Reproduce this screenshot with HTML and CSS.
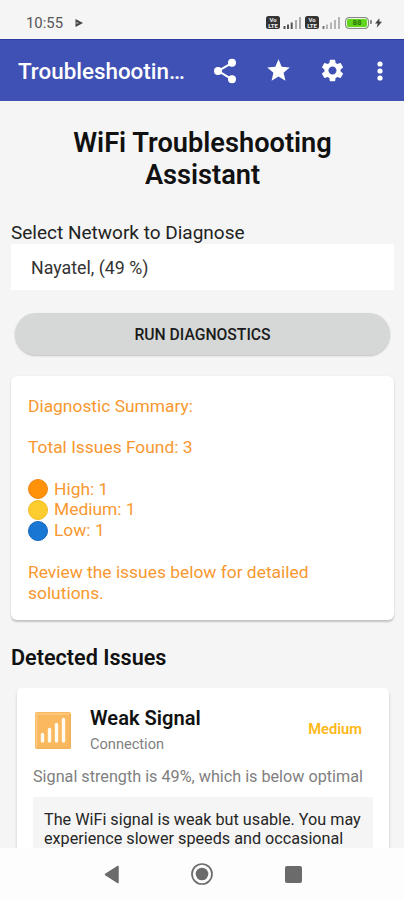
FILE: index.html
```html
<!DOCTYPE html>
<html lang="en">
<head>
<meta charset="utf-8">
<title>WiFi Troubleshooting Assistant</title>
<link rel="stylesheet" href="styles.css">
</head>
<body>
<div class="screen">
  <div class="status">
    <span class="clock">10:55</span>
    <svg class="play" width="8" height="8" viewBox="0 0 8 8"><path d="M.5 0L8 4 .5 8z" fill="#444"/><path d="M1 4h2.500" stroke="#ccc"/></svg>
    <div class="indicators">
      <span class="volte"><span>Vo</span><span>LTE</span></span>
      <svg class="bars" width="19" height="12" viewBox="0 0 19 12"><path d="M1.500 9v3M5 7.500V12M8.700 5.500V12" stroke="#555" stroke-width="2"/><path d="M13 3v9M17 0v12" stroke="#aaa" stroke-width="2"/></svg>
      <span class="volte second"><span>Vo</span><span>LTE</span></span>
      <svg class="bars" width="19" height="12" viewBox="0 0 19 12"><path d="M1.500 9v3" stroke="#777" stroke-width="2"/><path d="M5 7.500V12M9 5.500V12M13 3v9M17 0v12" stroke="#b5b5b5" stroke-width="2"/></svg>
      <span class="battery"><span>88</span></span>
      <svg class="bolt" width="7" height="10" viewBox="0 0 8 11"><path d="M5 0L0 6h3L2 11l6-7H5z" fill="#444"/></svg>
    </div>
  </div>
  <header class="appbar">
    <span class="bar-title">Troubleshootin…</span>
    <svg class="share" width="28" height="28" viewBox="0 0 24 24"><path fill="#fff" d="M18 16.080c-.76 0-1.440.3-1.960.77L8.910 12.700c.05-.23.090-.46.090-.7s-.04-.47-.09-.7l7.050-4.110c.54.5 1.250.81 2.040.81 1.660 0 3-1.340 3-3s-1.340-3-3-3-3 1.340-3 3c0 .24.040.47.090.7L8.040 9.810C7.500 9.310 6.790 9 6 9c-1.660 0-3 1.340-3 3s1.340 3 3 3c.79 0 1.500-.31 2.040-.81l7.120 4.160c-.05.21-.08.430-.08.650 0 1.610 1.310 2.920 2.920 2.920s2.920-1.310 2.920-2.920-1.310-2.920-2.920-2.920z"/><g fill="#fff"><circle cx="18" cy="5" r="3.400"/><circle cx="6" cy="12" r="3.400"/><circle cx="18" cy="19" r="3.400"/></g></svg>
    <svg class="star" width="27" height="27" viewBox="0 0 24 24"><path fill="#fff" d="M12 17.270L18.180 21l-1.640-7.030L22 9.240l-7.190-.61L12 2 9.190 8.630 2 9.240l5.460 4.730L5.820 21z"/></svg>
    <svg class="gear" width="27" height="27" viewBox="0 0 24 24"><path fill="#fff" d="M19.140 12.940c.04-.3.060-.61.060-.94 0-.32-.02-.64-.07-.94l2.030-1.580c.18-.14.230-.41.120-.61l-1.920-3.320c-.12-.22-.37-.29-.59-.22l-2.390.96c-.5-.38-1.030-.7-1.620-.94l-.36-2.540c-.04-.24-.24-.41-.48-.41h-3.840c-.24 0-.43.170-.47.410l-.36 2.540c-.59.240-1.130.570-1.620.940l-2.390-.96c-.22-.08-.47 0-.59.220L2.740 8.870c-.12.210-.08.470.12.610l2.030 1.580c-.05.3-.09.630-.09.940s.02.640.07.940l-2.030 1.580c-.18.140-.23.410-.12.610l1.920 3.320c.12.220.37.290.59.220l2.390-.96c.5.380 1.030.7 1.620.940l.36 2.540c.05.240.24.410.48.410h3.840c.24 0 .44-.17.470-.41l.36-2.540c.59-.24 1.130-.56 1.620-.94l2.390.96c.22.080.47 0 .59-.22l1.920-3.320c.12-.22.070-.47-.12-.61l-2.010-1.580zM12 15.600c-1.980 0-3.600-1.620-3.600-3.600s1.620-3.600 3.600-3.600 3.600 1.620 3.600 3.600-1.620 3.600-3.600 3.600z"/></svg>
    <svg class="more" width="6" height="20" viewBox="0 0 6 20"><g fill="#fff"><circle cx="3" cy="3" r="2.600"/><circle cx="3" cy="10" r="2.600"/><circle cx="3" cy="17" r="2.600"/></g></svg>
  </header>
  <main class="content">
    <h1>WiFi Troubleshooting<br>Assistant</h1>
    <label class="select-label">Select Network to Diagnose</label>
    <div class="select"><span>Nayatel, (49 %)</span></div>
    <button class="run"><span>RUN DIAGNOSTICS</span></button>
    <section class="summary">
      <p><span>Diagnostic Summary:</span></p>
      <p class="gap"><span>Total Issues Found: 3</span></p>
      <p class="gap level"><i class="dot high"></i><span>High: 1</span></p>
      <p class="level"><i class="dot medium"></i><span>Medium: 1</span></p>
      <p class="level"><i class="dot low"></i><span>Low: 1</span></p>
      <p class="gap"><span>Review the issues below for detailed</span></p>
      <p><span>solutions.</span></p>
    </section>
    <h2>Detected Issues</h2>
    <section class="issue">
      <div class="issue-head">
        <svg width="36" height="37" viewBox="0 0 36 37"><rect width="36" height="37" rx="2" fill="#fab85f"/><path d="M1.500 35V2h33" fill="none" stroke="#ffcb85" stroke-width="1.500"/><path d="M35.300 2v34H1" fill="none" stroke="#efae5b" stroke-width="1.200"/><path d="M7.500 22.500v6.500M14.500 17.500V29M21.500 12.500V29M28.500 7.500V29" stroke="#fffaf0" stroke-width="3.400" stroke-linecap="round"/></svg>
        <div class="issue-name"><h3>Weak Signal</h3><span class="category">Connection</span></div>
        <span class="severity">Medium</span>
      </div>
      <p class="desc">Signal strength is 49%, which is below optimal</p>
      <div class="detail"><p>The WiFi signal is weak but usable. You may</p><p>experience slower speeds and occasional</p></div>
    </section>
  </main>
  <nav class="navbar">
    <svg width="15" height="19" viewBox="0 0 15 19"><path d="M14 1.500v16L1.500 9.500z" fill="#6b6b6b" stroke="#6b6b6b" stroke-width="1.500" stroke-linejoin="round"/></svg>
    <svg width="22" height="22" viewBox="0 0 22 22"><circle cx="11" cy="11" r="10" fill="none" stroke="#6b6b6b" stroke-width="1.700"/><circle cx="11" cy="11" r="6.300" fill="#6b6b6b"/></svg>
    <svg width="17" height="17" viewBox="0 0 17 17"><rect width="17" height="17" rx="2" fill="#6b6b6b"/></svg>
  </nav>
</div>
</body>
</html>
```

FILE: styles.css
```css
* { box-sizing: border-box; margin: 0; padding: 0; }
body { font-family: Roboto, "Liberation Sans", sans-serif; color: #111; background: #f5f5f5; }
svg { display: block; flex: none; }
.screen { width: 404px; height: 900px; overflow: hidden; display: flex; flex-direction: column; background: #f5f5f5; white-space: nowrap; }
.status { flex: none; height: 39px; display: flex; align-items: center; padding: 6px 22px 0 26px; }
.clock { font-size: 14.900px; color: #555; width: 38px; }
.play { margin-left: 11px; }
.indicators { margin-left: auto; display: flex; align-items: center; }
.volte { width: 14px; height: 13px; border-radius: 2.500px; background: #333; color: #eee; display: flex; flex-direction: column; align-items: center; justify-content: center; font-size: 6px; line-height: 5.500px; font-weight: 700; margin-right: 3px; }
.volte.second { margin-left: 3px; }
.battery { width: 24px; height: 12px; border: 1.500px solid #888; border-radius: 4px; background: #63d51c; box-shadow: inset 0 0 0 1px #e8f5df; margin-left: 4px; color: #28720a; font-size: 8px; line-height: 9px; font-weight: 700; text-align: center; position: relative; }
.battery::after { content: ""; position: absolute; right: -4px; top: 2.500px; width: 2px; height: 4px; background: #888; border-radius: 0 1px 1px 0; }
.bolt { margin-left: 6px; }
.appbar { flex: none; height: 62px; background: #3f51b5; border-top: 1px solid #2c3d9f; display: flex; align-items: center; padding: 0 21px 0 18px; color: #fff; }
.bar-title { font-size: 22.400px; font-weight: 500; width: 166px; padding-top: 1px; }
.share { margin-left: 27px; }
.star { margin-left: 26px; }
.gear { margin-left: 27px; }
.more { margin-left: auto; }
.content { flex: 1; min-height: 0; overflow: hidden; padding: 26px 10px 0 11px; display: flex; flex-direction: column; }
h1 { font-size: 27.200px; line-height: 32px; font-weight: 600; text-align: center; }
.select-label { font-size: 19px; line-height: 22px; margin-top: 29px; height: 25px; padding-top: 2px; color: #222; }
.select { flex: none; height: 46px; background: #fff; display: flex; align-items: center; padding: 1px 0 0 20px; font-size: 17.800px; color: #333; }
.run { flex: none; height: 42px; margin: 23px 4px 0; border: 0; border-radius: 21px; background: #d6d8d7; font: 500 15.700px Roboto, sans-serif; color: #1c1c1c; box-shadow: 0 1px 2px rgba(0,0,0,.22); }
.summary { flex: none; height: 244px; margin-top: 21px; padding: 19.500px 17px; border-radius: 6px; background: #fff; box-shadow: 0 2px 2px rgba(0,0,0,.2), 0 0 2px rgba(0,0,0,.06); font-size: 17.400px; line-height: 20.800px; color: #f8982f; }
.gap { margin-top: 20.800px; }
.level { display: flex; align-items: center; }
.dot { width: 20px; height: 20px; border-radius: 50%; margin-right: 6px; }
.high { background: #ff9208; border: 1px solid #ef8515; }
.medium { background: #fdcd2f; border: 1px solid #efbd27; }
.low { background: #1976d2; border: 1px solid #1665bd; }
h2 { font-size: 21.600px; line-height: 26px; font-weight: 600; margin-top: 25px; }
.issue { flex: none; height: 260px; margin: 17px 5px 0 6px; padding: 18px 16px; border-radius: 5px; background: #fff; box-shadow: 0 2px 3px rgba(0,0,0,.2); }
.issue-head { display: flex; height: 50px; padding-left: 2px; }
.issue-head svg { margin-top: 6px; }
.issue-name { margin-left: 19px; }
h3 { font-size: 20.100px; line-height: 25px; font-weight: 600; }
.category { display: block; font-size: 14.600px; line-height: 17px; margin-top: 5px; color: #808080; }
.severity { margin: 15px 11px 0 auto; font-size: 14.700px; line-height: 17px; font-weight: 600; color: #fdb817; }
.desc { font-size: 16.200px; line-height: 20px; margin-top: 11px; color: #808080; }
.detail { background: #f5f5f5; margin-top: 10px; height: 120px; padding: 13px 11px; font-size: 16.200px; line-height: 19px; color: #262626; }
.navbar { flex: none; height: 52px; background: #fdfdfd; display: flex; align-items: center; padding: 0 102px 0 104px; justify-content: space-between; }
```
